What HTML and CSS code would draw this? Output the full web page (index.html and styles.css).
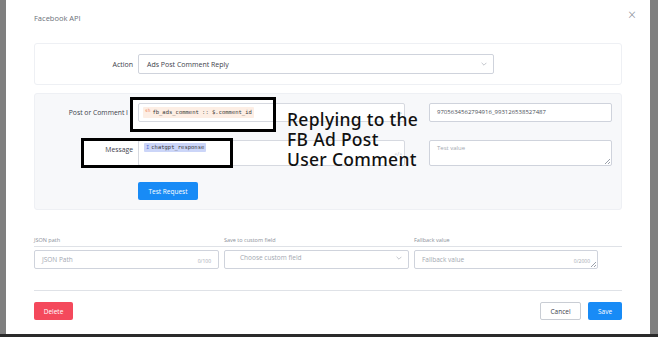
FILE: index.html
```html
<!DOCTYPE html>
<html lang="en">
<head>
    <meta charset="UTF-8">
    <meta name="viewport" content="width=device-width, initial-scale=1.0">
    <title>Facebook API</title>
    <link rel="stylesheet" href="styles.css">
</head>
<body>
    <div class="modal">
        <div class="modal-header">
            <h2>Facebook API</h2>
            <span class="close">&times;</span>
        </div>

        <div class="card">
            <div class="row">
                <label>Action</label>
                <div class="select">
                    <span>Ads Post Comment Reply</span>
                    <svg class="chevron" viewBox="0 0 10 6"><path d="M1 1l4 4 4-4" fill="none" stroke="#9aa0ab" stroke-width="1"/></svg>
                </div>
            </div>
        </div>

        <div class="card card-grey">
            <!-- white fill of the annotation boxes sits under the form -->
            <div class="note-fill note-one"></div>
            <div class="note-fill note-two"></div>

            <div class="row row-test">
                <label class="label-cut">Post or Comment I</label>
                <div class="tag-input">
                    <span class="chip chip-orange"><b>sh</b>fb_ads_comment :: $.comment_id</span>
                    <span class="code">&lt;/&gt;</span>
                </div>
                <span></span>
                <div class="test-input">9705634562794916_993126538527487</div>
            </div>
            <div class="row row-test row-tall">
                <label>Message</label>
                <div class="tag-input">
                    <span class="chip chip-blue"><b>I</b>chatgpt_response</span>
                    <span class="code">&lt;/&gt;</span>
                </div>
                <span></span>
                <div class="test-input placeholder">Test value<span class="grip"></span></div>
            </div>
            <div class="row row-test">
                <span></span>
                <button class="btn btn-blue btn-test">Test Request</button>
            </div>

            <div class="note-box note-one"></div>
            <div class="note-box note-two"></div>
            <p class="note-text">Replying to the<br>FB Ad Post<br>User Comment</p>
        </div>

        <div class="mapping">
            <div class="mapping-head">
                <span>JSON path</span>
                <span>Save to custom field</span>
                <span>Fallback value</span>
            </div>
            <div class="mapping-fields">
                <div class="field">JSON Path<small>0/100</small></div>
                <div class="field field-select">Choose custom field
                    <svg class="chevron" viewBox="0 0 10 6"><path d="M1 1l4 4 4-4" fill="none" stroke="#9aa0ab" stroke-width="1"/></svg>
                </div>
                <div class="field">Fallback value<small>0/2000</small><span class="grip"></span></div>
            </div>
        </div>

        <div class="modal-footer">
            <button class="btn btn-red">Delete</button>
            <div class="footer-right">
                <button class="btn btn-white">Cancel</button>
                <button class="btn btn-blue">Save</button>
            </div>
        </div>
    </div>
</body>
</html>
```

FILE: styles.css
```css
* {
    padding: 0;
    margin: 0;
    box-sizing: border-box;
}
body {
    background: #7f7f7f;
    font-family: "Open Sans", Arial, sans-serif;
    color: #4a4f58;
    height: 337px;
    overflow: hidden;
    border-bottom: 3px solid #2a2a2a;
}
.modal {
    position: relative;
    width: 644px;
    height: 334px;
    margin-left: 6px;
    background: #fff;
    padding: 0 28px;
}
.modal-header {
    display: flex;
    justify-content: space-between;
    align-items: flex-start;
    height: 43px;
    padding-top: 13px;
}
.modal-header h2 {
    font-size: 7.5px;
    font-weight: 400;
    color: #6b7079;
}
.close {
    font-size: 14px;
    line-height: 10px;
    color: #8a8f98;
    margin-right: -14px;
    margin-top: -3px;
    font-weight: 300;
}
.card {
    border: 1px solid #eef0f4;
    border-radius: 3px;
    padding: 10px 0;
    margin-bottom: 8px;
}
.card-grey {
    position: relative;
    background: #f7f8fa;
    height: 117px;
    padding-top: 9px;
}
.row {
    position: relative;
    z-index: 1;
    display: grid;
    grid-template-columns: 98px 356px;
    column-gap: 5px;
    align-items: center;
}
.row label {
    text-align: right;
    font-size: 7px;
    color: #3d424b;
    white-space: nowrap;
}
.row-test {
    grid-template-columns: 98px 267px 14px 183px;
    margin-bottom: 18px;
    align-items: start;
}
.row-test label {
    padding-top: 5px;
    font-size: 6.8px;
}
.row-test .label-cut {
    padding-right: 5px;
}
.row-tall {
    margin-bottom: 16px;
}
.select {
    height: 20px;
    border: 1px solid #cfd3dc;
    border-radius: 2px;
    display: flex;
    align-items: center;
    justify-content: space-between;
    padding: 0 6px 0 8px;
    font-size: 7px;
    color: #3d424b;
    background: #fff;
}
.chevron {
    width: 6px;
    height: 4px;
}
.tag-input {
    position: relative;
    display: flex;
    align-items: flex-start;
    height: 19px;
    border: 1px solid #d6d9e0;
    border-radius: 2px;
    background: #fff;
    padding: 3px 4px;
}
.row-tall .tag-input {
    height: 26px;
    padding: 2px 5px;
}
.chip {
    display: block;
    font-family: "DejaVu Sans Mono", monospace;
    font-size: 5.5px;
    line-height: 11px;
    padding: 0 2px;
    color: #3a3a3a;
    border-radius: 1px;
    white-space: nowrap;
}
.chip b {
    font-weight: 400;
    margin-right: 2px;
}
.chip-orange {
    background: #fdeee4;
}
.chip-orange b {
    color: #f08a5d;
    font-size: 4.5px;
    vertical-align: top;
    line-height: 8px;
}
.chip-blue {
    background: #cbd5f8;
    line-height: 9px;
}
.chip-blue b {
    color: #5b74d8;
}
.code {
    position: absolute;
    right: 2px;
    top: 6px;
    font-size: 5px;
    color: #b0b4bc;
}
.row-tall .code {
    top: 10px;
}
.test-input {
    position: relative;
    height: 19px;
    border: 1px solid #cfd3dc;
    border-radius: 2px;
    background: #fff;
    font-size: 6px;
    color: #4a4f58;
    padding: 4px 7px;
}
.row-tall .test-input {
    height: 26px;
    padding-top: 3px;
}
.placeholder {
    color: #a3a8b1;
}
.grip {
    position: absolute;
    right: 1px;
    bottom: 1px;
    width: 5px;
    height: 5px;
    background: linear-gradient(135deg, transparent 45%, #9aa0ab 45%, #9aa0ab 55%, transparent 55%, transparent 75%, #9aa0ab 75%, #9aa0ab 85%, transparent 85%);
}
.btn {
    font-family: "Open Sans", Arial, sans-serif;
    font-size: 6.5px;
    border: none;
    border-radius: 2px;
    height: 18px;
    padding: 0 8px;
    color: #fff;
}
.btn-blue {
    background: #188bf6;
}
.btn-test {
    width: 60px;
}
.btn-red {
    background: #f4495c;
    width: 39px;
}
.btn-white {
    background: #fff;
    color: #3d424b;
    border: 1px solid #c9cdd4;
    width: 41px;
}
.footer-right {
    display: flex;
    gap: 7px;
}
.footer-right .btn-blue {
    width: 34px;
}
.note-fill,
.note-box {
    position: absolute;
}
.note-fill {
    background: #fff;
    z-index: 0;
}
.note-box {
    border: 3px solid #000;
    z-index: 2;
}
.note-one {
    left: 95px;
    top: 3px;
    width: 146px;
    height: 35px;
}
.note-two {
    left: 46px;
    top: 44px;
    width: 152px;
    height: 30px;
}
.note-text {
    position: absolute;
    z-index: 2;
    left: 252px;
    top: 15px;
    font-family: "Noto Sans", sans-serif;
    font-weight: 500;
    font-size: 17.5px;
    letter-spacing: 0.3px;
    line-height: 20px;
    color: #111;
}
.mapping {
    padding-top: 18px;
    border-bottom: 1px solid #dfe2e7;
    padding-bottom: 21px;
}
.mapping-head {
    display: grid;
    grid-template-columns: 185px 185px 184px;
    column-gap: 5px;
    font-size: 5.5px;
    color: #8a8f98;
    padding-bottom: 2px;
    border-bottom: 1px solid #dfe2e7;
    margin-bottom: 3px;
}
.mapping-fields {
    display: grid;
    grid-template-columns: 185px 185px 184px;
    column-gap: 5px;
}
.field {
    position: relative;
    height: 19px;
    border: 1px solid #cfd3dc;
    border-radius: 2px;
    font-size: 6.5px;
    color: #a3a8b1;
    padding: 4px 7px;
    display: flex;
    justify-content: space-between;
}
.field small {
    font-size: 5px;
    padding-top: 3px;
}
.field-select {
    padding-left: 15px;
    align-items: center;
    padding-top: 0;
    padding-right: 6px;
}
.modal-footer {
    display: flex;
    justify-content: space-between;
    padding-top: 11px;
}
```
